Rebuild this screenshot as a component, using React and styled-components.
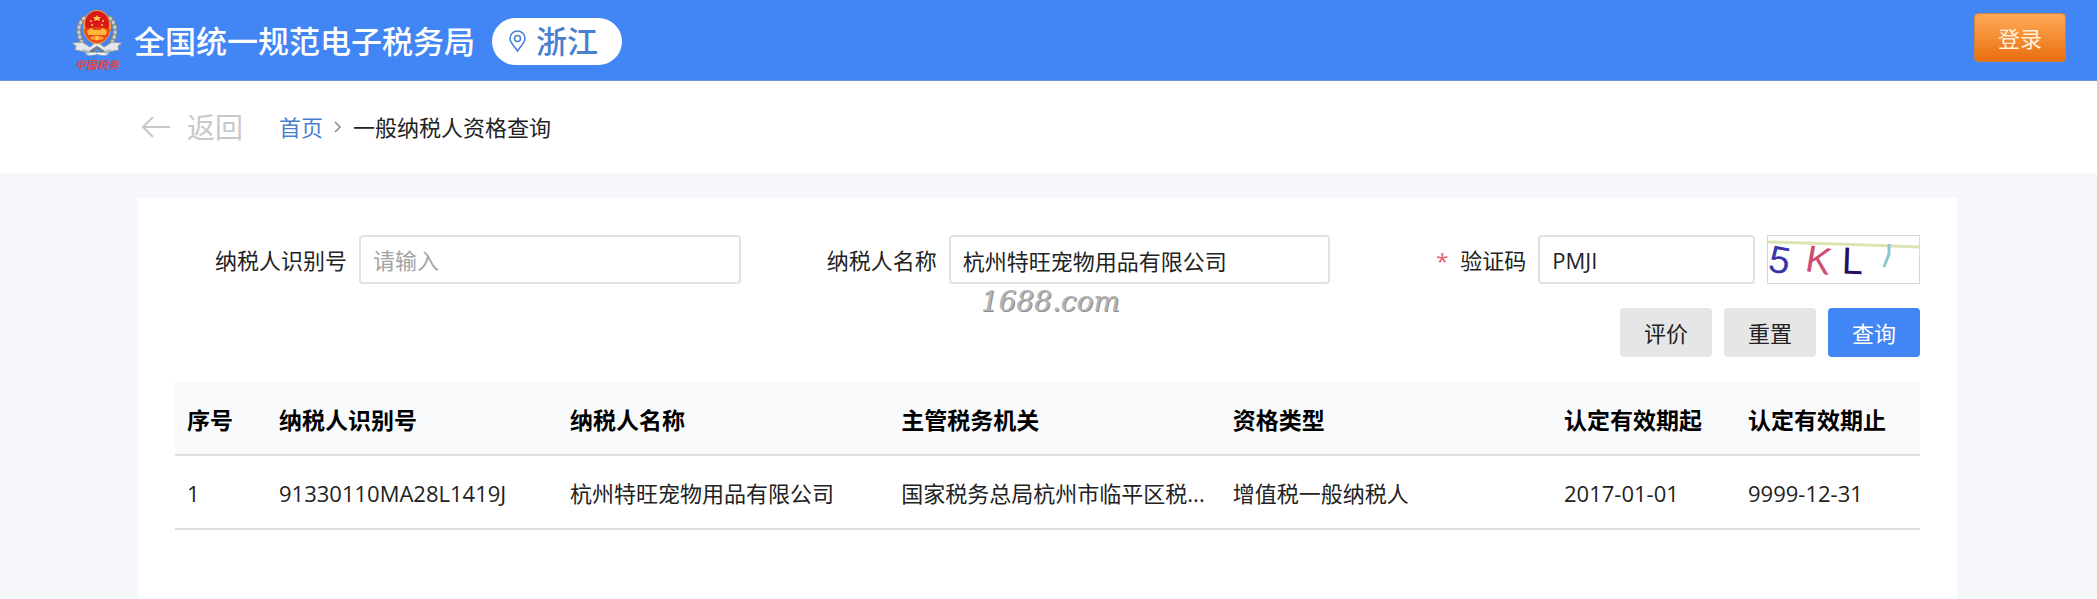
import React, { useState } from "react";
import styled, { createGlobalStyle } from "styled-components";

const GlobalStyle = createGlobalStyle`
  * {
    box-sizing: border-box;
  }

  body {
    margin: 0;
    background: #f6f7fa;
    color: #222;
    font-family: "Open Sans", "Noto Sans CJK SC", sans-serif;
    font-size: 22px;
    line-height: 32px;
  }

  input,
  button {
    font: inherit;
    color: inherit;
  }
`;

const Page = styled.div`
  display: flex;
  flex-direction: column;
  min-height: 100vh;
`;

// Top blue bar
const Header = styled.header`
  display: flex;
  align-items: center;
  height: 81px;
  padding: 0 31px 0 72px;
  background: #4285f4;
  border-bottom: 1px solid #6c92cf;
`;

const SiteName = styled.h1`
  margin: 0 17px 0 11px;
  padding-top: 2px;
  color: #fff;
  font-size: 31px;
  font-weight: 500;
  line-height: 46px;
`;

const Region = styled.button`
  display: flex;
  align-items: center;
  gap: 10px;
  height: 47px;
  margin-top: 2px;
  padding: 0 24px 0 17px;
  border: 0;
  border-radius: 24px;
  background: #fff;
  color: #4a80d0;
  font-size: 31px;
  font-weight: 500;
  line-height: 46px;
`;

const LoginButton = styled.button`
  align-self: flex-start;
  width: 92px;
  height: 49px;
  margin: 13px 0 0 auto;
  padding: 0;
  border: 1px solid #c98040;
  border-radius: 4px;
  background: linear-gradient(#ffab57, #e96e10);
  color: #fff1d8;
`;

// Back link and breadcrumb
const SubBar = styled.div`
  display: flex;
  align-items: center;
  height: 92px;
  padding: 0 140px;
  background: #fff;
`;

const BackLink = styled.a`
  display: flex;
  align-items: center;
  gap: 17px;
  color: #c8c8c8;
  font-size: 28px;
  text-decoration: none;
`;

const Breadcrumb = styled.nav`
  display: flex;
  align-items: center;
  gap: 11px;
  margin-left: 36px;

  a {
    color: #4a80d0;
    text-decoration: none;
  }
`;

// White content card
const Card = styled.main`
  flex: 1;
  margin: 25px 140px 0 138px;
  padding: 37px 37px 24px;
  background: #fff;
`;

const SearchForm = styled.form`
  display: grid;
  grid-template-columns: repeat(3, minmax(0, 1fr));
  gap: 24px;
`;

const Field = styled.div`
  position: relative;
  display: flex;
  align-items: center;
`;

const Label = styled.label`
  flex: 0 0 184px;
  padding-right: 12px;
  text-align: right;
`;

const Required = styled.span`
  margin-right: 12px;
  color: #e0646c;
`;

const TextInput = styled.input`
  flex: 1;
  width: 0;
  min-width: 0;
  height: 49px;
  padding: 0 12px;
  border: 2px solid #e2e2e2;
  border-radius: 4px;
  background: #fff;
  outline: none;

  &::placeholder {
    color: #a3a3a3;
    opacity: 1;
  }
`;

const Captcha = styled.svg`
  flex: none;
  width: 153px;
  height: 49px;
  margin-left: 12px;
  border: 1px solid #d8d8d8;
`;

const Watermark = styled.span`
  position: absolute;
  top: 51px;
  left: 216px;
  color: #b4b4b4;
  font-family: "DejaVu Serif", serif;
  font-size: 28px;
  font-style: italic;
  line-height: 32px;
  text-shadow: 1px 1px 0 #8c8c8c;
  pointer-events: none;
`;

const Actions = styled.div`
  grid-column: 1 / -1;
  display: flex;
  justify-content: flex-end;
  gap: 12px;
`;

const ActionButton = styled.button`
  width: 92px;
  height: 49px;
  padding: 0;
  border: 0;
  border-radius: 4px;
  background: ${(props) => (props.$primary ? "#4285f4" : "#e6e6e6")};
  color: ${(props) => (props.$primary ? "#fff" : "#222")};
`;

const ResultTable = styled.table`
  width: 100%;
  margin-top: 25px;
  border-collapse: separate;
  border-spacing: 0;
  table-layout: fixed;
`;

const HeadCell = styled.th`
  width: ${(props) => props.$width || "auto"};
  height: 74px;
  padding: 4px 12px 0;
  border-bottom: 2px solid #e0e0e0;
  background: #f9fafc;
  color: #000;
  font-size: 23px;
  font-weight: 700;
  text-align: left;
  white-space: nowrap;
`;

const Cell = styled.td`
  height: 74px;
  padding: 2px 12px 0;
  border-bottom: 2px solid #e0e0e0;
  white-space: nowrap;
`;

const columns = [
  { key: "index", title: "序号", width: "92px" },
  { key: "taxId", title: "纳税人识别号", width: "291px" },
  { key: "name", title: "纳税人名称" },
  { key: "office", title: "主管税务机关" },
  { key: "type", title: "资格类型" },
  { key: "from", title: "认定有效期起", width: "184px" },
  { key: "to", title: "认定有效期止", width: "184px" },
];

const rows = [
  {
    index: 1,
    taxId: "91330110MA28L1419J",
    name: "杭州特旺宠物用品有限公司",
    office: "国家税务总局杭州市临平区税...",
    type: "增值税一般纳税人",
    from: "2017-01-01",
    to: "9999-12-31",
  },
];

const Emblem = () => (
  <svg width="51" height="64" viewBox="0 0 51 64" aria-hidden="true">
    {/* wheat wreath */}
    <g fill="none" strokeLinecap="round">
      <path d="M12 10C4 18 5 32 17 43" stroke="#7d8790" strokeWidth="5" />
      <path d="M38 10C46 18 45 32 33 43" stroke="#7d8790" strokeWidth="5" />
      <path d="M12 10C4 18 5 32 17 43" stroke="#c9ced2" strokeWidth="3" strokeDasharray="1 4" />
      <path d="M38 10C46 18 45 32 33 43" stroke="#c9ced2" strokeWidth="3" strokeDasharray="1 4" />
    </g>
    {/* ribbon */}
    <path
      d="M0 35L10 34L18 39L25 33L32 39L40 34L50 35L46 38L47 42L36 44L25 47L14 44L3 42L4 38Z"
      fill="#e3e7ec"
      stroke="#8995a6"
      strokeWidth="1"
    />
    <path d="M10 41L25 45L40 41L34 48L25 47L16 48Z" fill="#aab3bd" />
    <path d="M17 43L25 38L33 43L25 47Z" fill="#6e7c8f" />
    <path d="M13 46L25 44L37 46L31 47L25 46L19 47Z" fill="#f4f6f8" />
    <circle cx="25" cy="43" r="2" fill="#5291df" />
    {/* medallion */}
    <ellipse cx="25" cy="19" rx="14" ry="17" fill="#f29a37" />
    <ellipse cx="25" cy="16" rx="12" ry="13" fill="#db1717" />
    <path d="M12 21Q25 17 38 21Q36 34 25 35Q14 34 12 21Z" fill="#e84617" />
    <path d="M15 23L19 20L22 22H28L31 20L35 23L34 27H16Z" fill="#ffb73b" />
    <path d="M17 30Q25 25 33 30Q25 35 17 30Z" fill="#ff962d" />
    <circle cx="25" cy="30" r="2" fill="#f9cd53" />
    <path d="M25 7L26 9H29L27 11L28 13L25 12L22 13L23 11L21 9H24Z" fill="#ffd04b" />
    <g fill="#ffd04b">
      <circle cx="19" cy="13" r="1" />
      <circle cx="31" cy="13" r="1" />
      <circle cx="20" cy="17" r="1" />
      <circle cx="30" cy="17" r="1" />
    </g>
    <text
      x="25"
      y="61"
      textAnchor="middle"
      fill="#df4740"
      fontFamily="Noto Sans CJK SC, sans-serif"
      fontSize="11"
      fontStyle="italic"
      fontWeight="700"
    >
      中国税务
    </text>
  </svg>
);

const PinIcon = () => (
  <svg width="17" height="22" viewBox="0 0 17 22" fill="none" stroke="#4a80d0" strokeWidth="1.6" aria-hidden="true">
    <path d="M8.500 21C6.500 17.500 1 13 1 8.500A7.500 7.500 0 0 1 16 8.500C16 13 10.500 17.500 8.500 21Z" />
    <circle cx="8.500" cy="8.500" r="3" />
  </svg>
);

const BackArrow = () => (
  <svg width="30" height="22" viewBox="0 0 30 22" fill="none" stroke="#c8c8c8" strokeWidth="2" aria-hidden="true">
    <path d="M13 1L3 11L13 21M3 11H30" />
  </svg>
);

const Chevron = () => (
  <svg width="8" height="12" viewBox="0 0 8 12" fill="none" stroke="#8c8c8c" strokeWidth="1.6" aria-hidden="true">
    <path d="M1 1L6 6L1 11" />
  </svg>
);

const CaptchaImage = () => (
  <Captcha viewBox="0 0 151 47" role="img" aria-label="验证码图片">
    <path d="M0 6L70 8L151 11" stroke="#dbe4b2" strokeWidth="3" fill="none" />
    <g fontFamily="Liberation Sans, sans-serif" fontSize="38">
      <text x="1" y="37" fill="#3a35a8" transform="rotate(10 12 24)">5</text>
      <text x="38" y="37" fill="#cf4d72" transform="rotate(10 50 24)">K</text>
      <text x="74" y="38" fill="#2c0c5e" transform="rotate(2 85 24)">L</text>
    </g>
    <path d="M121 8V18L116 31" stroke="#8fc3d2" strokeWidth="3" fill="none" />
  </Captcha>
);

const App = () => {
  const [taxId, setTaxId] = useState("");
  const [name, setName] = useState("杭州特旺宠物用品有限公司");
  const [code, setCode] = useState("PMJI");

  const handleReset = () => {
    setTaxId("");
    setName("");
    setCode("");
  };

  return (
    <>
      <GlobalStyle />
      <Page>
        <Header>
          <Emblem />
          <SiteName>全国统一规范电子税务局</SiteName>
          <Region type="button">
            <PinIcon />
            浙江
          </Region>
          <LoginButton type="button">登录</LoginButton>
        </Header>

        <SubBar>
          <BackLink href="#back">
            <BackArrow />
            返回
          </BackLink>
          <Breadcrumb>
            <a href="#home">首页</a>
            <Chevron />
            <span>一般纳税人资格查询</span>
          </Breadcrumb>
        </SubBar>

        <Card>
          <SearchForm onSubmit={(e) => e.preventDefault()}>
            <Field>
              <Label htmlFor="taxId">纳税人识别号</Label>
              <TextInput
                id="taxId"
                placeholder="请输入"
                value={taxId}
                onChange={(e) => setTaxId(e.target.value)}
              />
            </Field>
            <Field>
              <Label htmlFor="name">纳税人名称</Label>
              <TextInput id="name" value={name} onChange={(e) => setName(e.target.value)} />
              <Watermark>1688.com</Watermark>
            </Field>
            <Field>
              <Label htmlFor="code">
                <Required>*</Required>
                验证码
              </Label>
              <TextInput id="code" value={code} onChange={(e) => setCode(e.target.value)} />
              <CaptchaImage />
            </Field>
            <Actions>
              <ActionButton type="button">评价</ActionButton>
              <ActionButton type="button" onClick={handleReset}>重置</ActionButton>
              <ActionButton type="submit" $primary>查询</ActionButton>
            </Actions>
          </SearchForm>

          <ResultTable>
            <thead>
              <tr>
                {columns.map((col) => (
                  <HeadCell key={col.key} $width={col.width}>{col.title}</HeadCell>
                ))}
              </tr>
            </thead>
            <tbody>
              {rows.map((row) => (
                <tr key={row.index}>
                  {columns.map((col) => (
                    <Cell key={col.key}>{row[col.key]}</Cell>
                  ))}
                </tr>
              ))}
            </tbody>
          </ResultTable>
        </Card>
      </Page>
    </>
  );
};

export default App;
